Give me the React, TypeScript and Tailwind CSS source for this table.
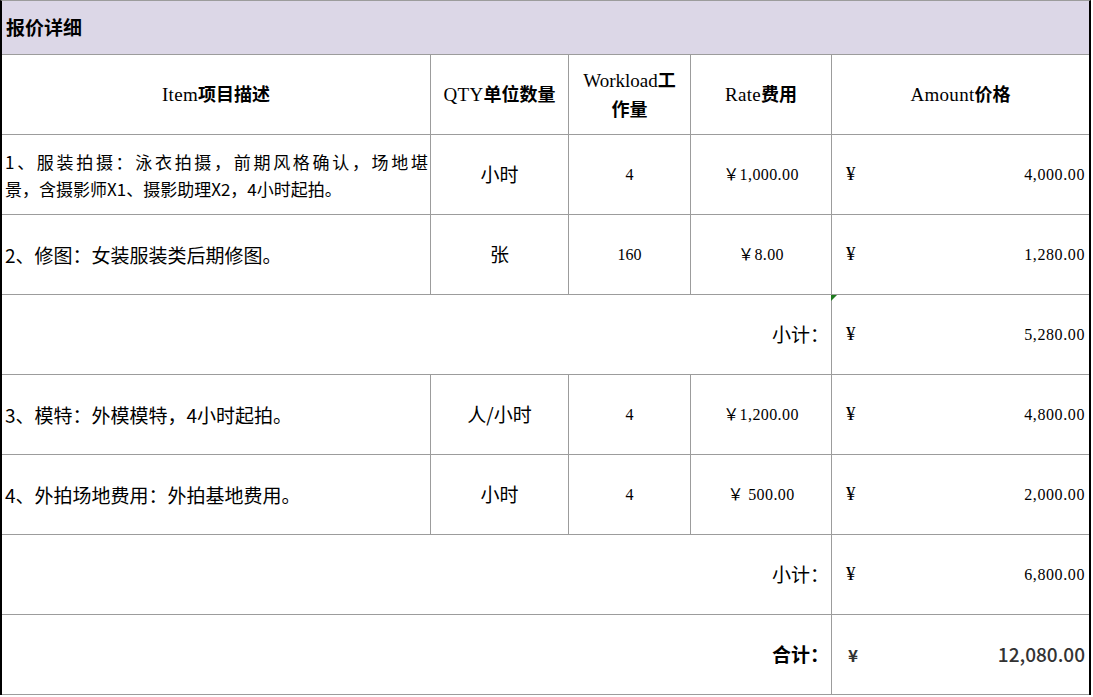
import React from "react";

const serif = "font-['Liberation_Serif','Noto_Sans_CJK_SC',serif]";
const sans = "font-['Noto_Sans_CJK_SC',sans-serif]";

type Item = {
  desc: React.ReactNode;
  unit: string;
  qty: string;
  rate: string;
  amount: string;
};

const cell = "h-[80px] border-b border-r border-[#9c9c9c] flex items-center";
const lastCell = "h-[80px] border-b border-[#9c9c9c] flex items-center";

function HeadLabel({ latin, cjk }: { latin: string; cjk: string }) {
  return (
    <span>
      <span className={`${serif} text-[19px] tracking-[0.3px]`}>{latin}</span>
      <span className={`${sans} font-bold text-[18px]`}>{cjk}</span>
    </span>
  );
}

function AmountCell({ value, mark }: { value: string; mark?: boolean }) {
  return (
    <div className={`${lastCell} relative justify-between pl-[14px] pr-[4px] ${serif} text-[16px] tracking-[0.6px]`}>
      {mark && (
        <div className="absolute -left-px top-0 w-0 h-0 border-t-[6px] border-t-[#1f7a1f] border-r-[6px] border-r-transparent" />
      )}
      <span className="text-[19px]">¥</span>
      <span>{value}</span>
    </div>
  );
}

function ItemRow({ item, small }: { item: Item; small?: boolean }) {
  return (
    <>
      <div className={`${cell} pl-[3px] pr-[2px] ${sans} ${small ? "text-[17px]" : "text-[19px]"} leading-[27px]`}>
        {item.desc}
      </div>
      <div className={`${cell} justify-center ${sans} text-[19px]`}>{item.unit}</div>
      <div className={`${cell} justify-center ${serif} text-[16px]`}>{item.qty}</div>
      <div className={`${cell} justify-center ${serif} text-[16px] tracking-[0.4px]`}>{item.rate}</div>
      <AmountCell value={item.amount} />
    </>
  );
}

function SubtotalRow({ value, mark }: { value: string; mark?: boolean }) {
  return (
    <>
      <div className={`${cell} col-span-4 justify-end pr-[2px] ${sans} text-[19px]`}>小计：</div>
      <AmountCell value={value} mark={mark} />
    </>
  );
}

const group1: Item[] = [
  {
    desc: (
      <div className="w-full">
        <div className="[text-align-last:justify]">1、服装拍摄：泳衣拍摄，前期风格确认，场地堪</div>
        <div>景，含摄影师X1、摄影助理X2，4小时起拍。</div>
      </div>
    ),
    unit: "小时",
    qty: "4",
    rate: "￥1,000.00",
    amount: "4,000.00",
  },
  { desc: "2、修图：女装服装类后期修图。", unit: "张", qty: "160", rate: "￥8.00", amount: "1,280.00" },
];

const group2: Item[] = [
  { desc: "3、模特：外模模特，4小时起拍。", unit: "人/小时", qty: "4", rate: "￥1,200.00", amount: "4,800.00" },
  { desc: "4、外拍场地费用：外拍基地费用。", unit: "小时", qty: "4", rate: "￥ 500.00", amount: "2,000.00" },
];

export default function App() {
  return (
    <div className="min-h-screen bg-white text-black">
      <div className="w-[1091px] border-x-2 border-x-black border-t border-t-[#9c9c9c]">
        <div className={`h-[54px] bg-[#dcd7e7] border-b border-[#9c9c9c] flex items-center pl-[4px] ${sans} font-bold text-[19px]`}>
          报价详细
        </div>

        <div className="grid grid-cols-[429px_138px_122px_141px_257px]">
          {/* header */}
          <div className={`${cell} justify-center`}>
            <HeadLabel latin="Item" cjk="项目描述" />
          </div>
          <div className={`${cell} justify-center`}>
            <HeadLabel latin="QTY" cjk="单位数量" />
          </div>
          <div className={`${cell} justify-center text-center leading-[27px]`}>
            <div>
              <span className={`${serif} text-[19px]`}>Workload</span>
              <span className={`${sans} font-bold text-[18px]`}>工</span>
              <br />
              <span className={`${sans} font-bold text-[18px]`}>作量</span>
            </div>
          </div>
          <div className={`${cell} justify-center`}>
            <HeadLabel latin="Rate" cjk="费用" />
          </div>
          <div className={`${lastCell} justify-center`}>
            <HeadLabel latin="Amount" cjk="价格" />
          </div>

          {group1.map((it, i) => (
            <ItemRow key={i} item={it} small={i === 0} />
          ))}
          <SubtotalRow value="5,280.00" mark />

          {group2.map((it, i) => (
            <ItemRow key={i} item={it} />
          ))}
          <SubtotalRow value="6,800.00" />

          {/* total */}
          <div className={`${cell} col-span-4 justify-end pr-[2px] ${sans} font-bold text-[19px]`}>合计：</div>
          <div className={`${lastCell} justify-between pl-[16px] pr-[4px] ${sans} text-[#333]`}>
            <span className="font-bold text-[17px]">¥</span>
            <span className="text-[19px] font-medium">12,080.00</span>
          </div>
        </div>
      </div>
    </div>
  );
}
